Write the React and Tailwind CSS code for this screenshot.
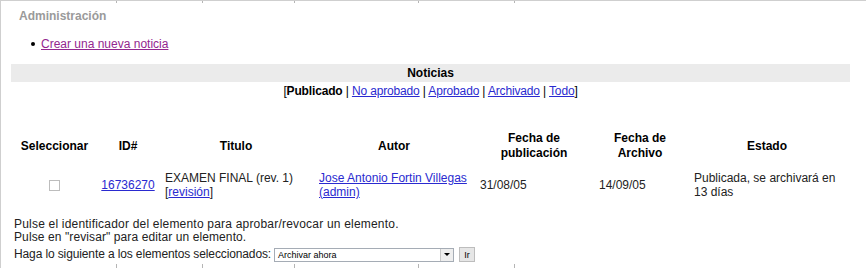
import React from "react";

const cols = "grid grid-cols-[83px_60px_152px_160px_116px_92px_158px] gap-x-[2px]";

const ticks = ["left-[115px]", "left-[201px]", "left-[293px]", "left-[417px]", "left-[513px]"];

export default function App() {
    return (
        <div className="relative h-[268px] w-[866px] overflow-hidden border-l border-t border-[#cfcfcf] bg-white text-[12px] text-[#222] font-['Liberation_Sans',Arial,sans-serif]">
            {ticks.map((t) => (
                <div key={"t" + t} className={`absolute top-0 h-[2px] w-px bg-[#b5b5b5] ${t}`} />
            ))}
            {ticks.map((t) => (
                <div key={"b" + t} className={`absolute bottom-0 h-[4px] w-px bg-[#b5b5b5] ${t}`} />
            ))}

            <div className="pl-[18px] pt-[8px] font-bold leading-[14px] text-[#9a9a9a]">Administración</div>

            <div className="mt-[14px] flex items-center leading-[14px]">
                <span className="ml-[30px] h-[4px] w-[4px] rounded-full bg-black" />
                <a href="#" className="ml-[6px] text-[#93278f] underline">Crear una nueva noticia</a>
            </div>

            <div className="ml-[10px] mt-[13px] w-[839px]">
                <div className="h-[18px] bg-[#ebebeb] text-center font-bold leading-[18px] text-black">Noticias</div>
                <div className="mt-[2px] text-center leading-[14px] tracking-[-0.15px] text-black">
                    [<b>Publicado</b> | <a href="#" className="text-[#2a2ad0] underline">No aprobado</a> |{" "}
                    <a href="#" className="text-[#2a2ad0] underline">Aprobado</a> |{" "}
                    <a href="#" className="text-[#2a2ad0] underline">Archivado</a> |{" "}
                    <a href="#" className="text-[#2a2ad0] underline">Todo</a>]
                </div>
            </div>

            <div className={`${cols} ml-[12px] mt-[33px] items-center text-center font-bold leading-[15px] text-black`}>
                <div>Seleccionar</div>
                <div>ID#</div>
                <div>Titulo</div>
                <div>Autor</div>
                <div>Fecha de<br />publicación</div>
                <div>Fecha de<br />Archivo</div>
                <div>Estado</div>
            </div>

            <div className={`${cols} ml-[12px] mt-[10px] items-center leading-[14px]`}>
                <div className="flex justify-center">
                    <div className="h-[11px] w-[11px] border border-[#bdbdbd] bg-white" />
                </div>
                <div className="text-center">
                    <a href="#" className="text-[#2a2ad0] underline">16736270</a>
                </div>
                <div className="px-[5px]">
                    EXAMEN FINAL (rev. 1)<br />
                    [<a href="#" className="text-[#2a2ad0] underline">revisión</a>]
                </div>
                <div className="px-[5px]">
                    <a href="#" className="text-[#2a2ad0] underline">Jose Antonio Fortin Villegas<br />(admin)</a>
                </div>
                <div className="px-[4px]">31/08/05</div>
                <div className="px-[5px]">14/09/05</div>
                <div className="px-[6px]">Publicada, se archivará en<br />13 días</div>
            </div>

            <div className="ml-[13px] mt-[19px] leading-[13px]">
                <div className="tracking-[0.2px]">Pulse el identificador del elemento para aprobar/revocar un elemento.</div>
                <div className="tracking-[0.1px]">Pulse en "revisar" para editar un elemento.</div>
                <div className="mt-[3px] flex items-center">
                    <span className="tracking-[-0.12px]">Haga lo siguiente a los elementos seleccionados:</span>
                    <div className="ml-[3px] flex h-[14px] w-[180px] items-center border border-[#a5acb5] bg-white">
                        <span className="flex-1 pl-[3px] text-[9px] leading-[12px] text-black">Archivar ahora</span>
                        <span className="flex h-[12px] w-[13px] items-center justify-center border-l border-[#c8c8c8] bg-[#eeeeee]">
                            <span className="h-0 w-0 border-x-[3px] border-t-[3px] border-x-transparent border-t-black" />
                        </span>
                    </div>
                    <button className="ml-[5px] flex h-[15px] w-[16px] items-center justify-center border border-[#bdbdbd] bg-[#e6e6e6] text-[9px] leading-[12px] text-black">Ir</button>
                </div>
            </div>
        </div>
    );
}
